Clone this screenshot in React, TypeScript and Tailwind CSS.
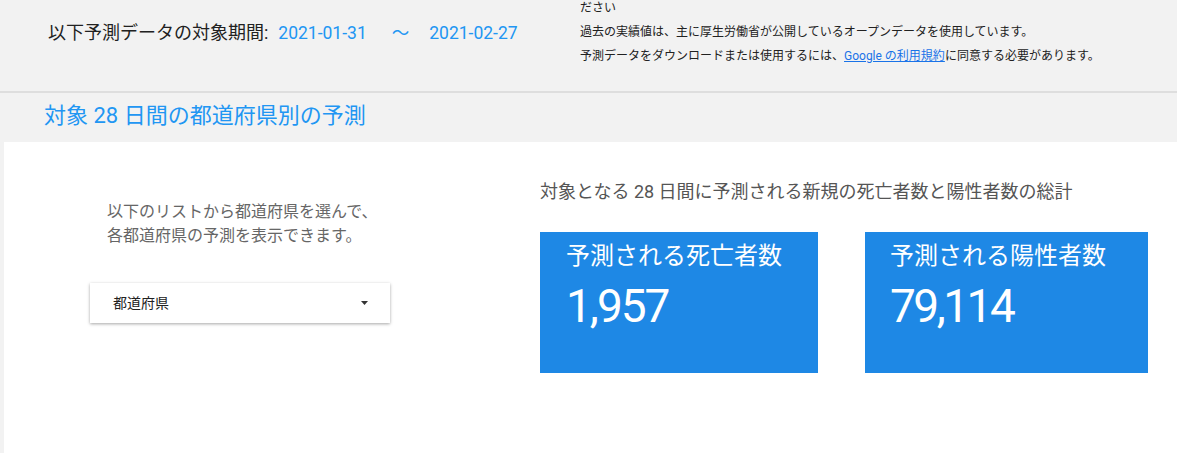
import React from "react";

const font = { fontFamily: 'Roboto, "Noto Sans CJK JP", sans-serif' };

export default function App() {
  return (
    <div className="w-[1177px] h-[453px] overflow-hidden bg-[#f2f2f2] flex flex-col" style={font}>
      {/* header */}
      <div className="h-[91px] flex items-start shrink-0">
        <div className="pl-[48px] pt-[21px] flex items-center leading-[24px] w-[580px] shrink-0">
          <span className="text-[18px] text-[#212121]">以下予測データの対象期間:</span>
          <span className="ml-[10px] text-[17.5px] text-[#2196f3]">2021-01-31</span>
          <span className="ml-[25px] text-[17.5px] text-[#2196f3]">〜</span>
          <span className="ml-[20px] text-[17.5px] text-[#2196f3]">2021-02-27</span>
        </div>
        <div className="-mt-[4px] text-[12px] leading-[24px] text-[#212121]">
          <div>ださい</div>
          <div>過去の実績値は、主に厚生労働省が公開しているオープンデータを使用しています。</div>
          <div>
            予測データをダウンロードまたは使用するには、
            <span className="text-[#1a73e8] underline">Google の利用規約</span>
            に同意する必要があります。
          </div>
        </div>
      </div>
      <div className="h-[2px] bg-[#dedede] shrink-0" />
      {/* title band */}
      <div className="h-[49px] pl-[44px] pt-[8px] shrink-0">
        <div className="text-[22px] leading-[30px] text-[#2196f3]">対象 28 日間の都道府県別の予測</div>
      </div>
      {/* white panel */}
      <div className="flex-1 ml-[4px] bg-white flex">
        <div className="ml-[86px] w-[300px] shrink-0 pt-[58px]">
          <div className="pl-[17px] text-[16px] leading-[24px] text-[#666666]">
            <div>以下のリストから都道府県を選んで、</div>
            <div>各都道府県の予測を表示できます。</div>
          </div>
          <div className="mt-[35px] h-[40px] bg-white shadow-[0_1px_3px_rgba(0,0,0,0.35)] flex items-center justify-between pl-[23px] pr-[22px]">
            <span className="text-[14px] text-[#212121]">都道府県</span>
            <svg width="7" height="4" viewBox="0 0 7 4">
              <path d="M0 0 L7 0 L3.5 4 Z" fill="#333" />
            </svg>
          </div>
        </div>
        <div className="ml-[150px] pt-[37px]">
          <div className="text-[18px] leading-[26px] text-[#555555]">対象となる 28 日間に予測される新規の死亡者数と陽性者数の総計</div>
          <div className="mt-[27px] flex gap-[47px]">
            <div className="w-[278px] h-[141px] bg-[#1e88e5] pl-[26px] pt-[10px] text-white">
              <div className="text-[24px] leading-[28px]">予測される死亡者数</div>
              <div className="mt-[6px] text-[46px] leading-[60px] tracking-[-2px]">1,957</div>
            </div>
            <div className="w-[283px] h-[141px] bg-[#1e88e5] pl-[25px] pt-[10px] text-white">
              <div className="text-[24px] leading-[28px]">予測される陽性者数</div>
              <div className="mt-[6px] text-[46px] leading-[60px] tracking-[-2.5px]">79,114</div>
            </div>
          </div>
        </div>
      </div>
    </div>
  );
}
